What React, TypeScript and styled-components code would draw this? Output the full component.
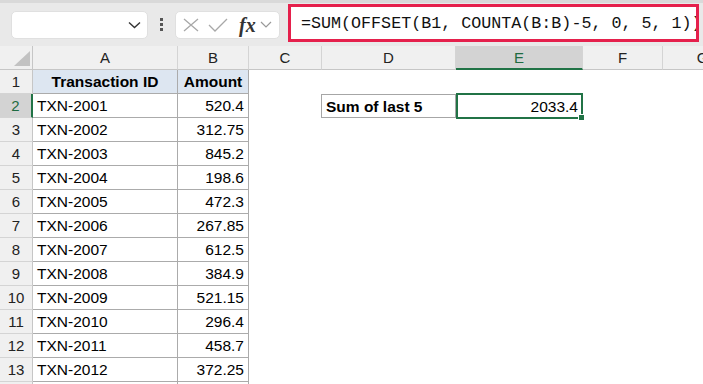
import { Fragment } from 'react';
import styled, { createGlobalStyle } from 'styled-components';

const GlobalStyle = createGlobalStyle`
  html, body {
    margin: 0;
    padding: 0;
    background: #ffffff;
    overflow: hidden;
  }
  body {
    font-family: "Liberation Sans", Arial, sans-serif;
  }
`;

const Page = styled.div`
  width: 703px;
  height: 384px;
  overflow: hidden;
  background: #ffffff;
`;

const FormulaBar = styled.div`
  height: 46px;
  box-sizing: border-box;
  border-top: 3px solid #d9d9d9;
  background: #e9e9e9;
  display: flex;
  align-items: center;
  padding: 0 4px 0 11px;
`;

const NameBox = styled.div`
  width: 137px;
  height: 28px;
  box-sizing: border-box;
  background: #ffffff;
  border-radius: 5px;
  border: 1px solid #e0e0e0;
  display: flex;
  align-items: center;
  justify-content: flex-end;
  padding-right: 6px;
`;

const Dots = styled.div`
  width: 27px;
  display: flex;
  flex-direction: column;
  align-items: center;
  gap: 2px;
  span {
    width: 3px;
    height: 3px;
    background: #555;
    display: block;
  }
`;

const FxBox = styled.div`
  width: 105px;
  height: 28px;
  box-sizing: border-box;
  background: #ffffff;
  border-radius: 5px;
  border: 1px solid #e0e0e0;
  display: flex;
  align-items: center;
  padding-left: 7px;
  gap: 9px;
`;

const Fx = styled.span`
  font-family: "Liberation Serif", "Times New Roman", serif;
  font-style: italic;
  font-weight: bold;
  font-size: 20px;
  color: #333;
  margin-left: 2px;
  margin-right: -5px;
  line-height: 1;
`;

const FormulaInput = styled.div`
  flex: 1;
  margin-left: 8px;
  height: 38px;
  margin-top: -3px;
  box-sizing: border-box;
  border: 3px solid #e5204c;
  background: #ffffff;
  font-family: "Liberation Mono", "DejaVu Sans Mono", monospace;
  font-size: 16.7px;
  color: #111;
  white-space: nowrap;
  overflow: hidden;
  display: flex;
  align-items: center;
  padding-left: 10px;
`;

const Grid = styled.div`
  display: grid;
  grid-template-columns: 33px 145px 71px 73px 134px 127px 80px 80px;
  grid-auto-rows: 24px;
  font-size: 15.5px;
`;

const ColHead = styled.div<{ $sel?: boolean }>`
  box-sizing: border-box;
  background: ${p => (p.$sel ? '#d3d3d3' : '#f0f0f0')};
  color: ${p => (p.$sel ? '#1e6b41' : '#222')};
  border-right: 1px solid #d4d4d4;
  border-bottom: ${p => (p.$sel ? '2px solid #217346' : '1px solid #c6c6c6')};
  display: flex;
  align-items: center;
  justify-content: center;
  font-size: 15px;
`;

const Corner = styled.div`
  box-sizing: border-box;
  background: #f0f0f0;
  border-right: 1px solid #c6c6c6;
  border-bottom: 1px solid #c6c6c6;
  display: flex;
  align-items: flex-end;
  justify-content: flex-end;
  padding: 0 2px 3px 0;
`;

const RowHead = styled.div<{ $sel?: boolean }>`
  box-sizing: border-box;
  background: ${p => (p.$sel ? '#d3d3d3' : '#f0f0f0')};
  color: ${p => (p.$sel ? '#1e6b41' : '#222')};
  border-right: ${p => (p.$sel ? '2px solid #217346' : '1px solid #c6c6c6')};
  border-bottom: 1px solid #d4d4d4;
  display: flex;
  align-items: center;
  justify-content: center;
  font-size: 15px;
`;

const Cell = styled.div<{ $head?: boolean; $num?: boolean }>`
  box-sizing: border-box;
  background: ${p => (p.$head ? '#dde6f1' : '#ffffff')};
  border-right: 1px solid #ababab;
  border-bottom: 1px solid #ababab;
  display: flex;
  align-items: center;
  justify-content: ${p => (p.$head ? 'center' : p.$num ? 'flex-end' : 'flex-start')};
  padding: 1px 4px 0;
  font-weight: ${p => (p.$head ? 'bold' : 'normal')};
  color: #000;
  white-space: nowrap;
`;

const Empty = styled.div`
  background: #ffffff;
`;

const LabelCell = styled.div`
  box-sizing: border-box;
  border: 1px solid #a6a6a6;
  margin-left: -1px;
  display: flex;
  align-items: center;
  padding: 1px 4px 0;
  font-weight: bold;
  color: #000;
`;

const ActiveCell = styled.div`
  position: relative;
  box-sizing: border-box;
  border: 2px solid #217346;
  margin: -1px 0 -1px 0;
  display: flex;
  align-items: center;
  justify-content: flex-end;
  padding: 1px 3px 0;
  color: #000;
`;

const FillHandle = styled.span`
  position: absolute;
  right: -4px;
  bottom: -4px;
  width: 5px;
  height: 5px;
  background: #217346;
  border: 1px solid #fff;
`;

const amounts = ['520.4', '312.75', '845.2', '198.6', '472.3', '267.85', '612.5', '384.9', '521.15', '296.4', '458.7', '372.25'];
const cols = ['A', 'B', 'C', 'D', 'E', 'F', 'G'];

export default function App() {
  return (
    <Page>
      <GlobalStyle />
      <FormulaBar>
        <NameBox>
          <svg width="13" height="8" viewBox="0 0 13 8">
            <path d="M1 1.5 L6.5 6.5 L12 1.5" fill="none" stroke="#333" strokeWidth="1.4" />
          </svg>
        </NameBox>
        <Dots>
          <span />
          <span />
          <span />
        </Dots>
        <FxBox>
          <svg width="16" height="14" viewBox="0 0 16 14">
            <path d="M1 1 L15 13 M15 1 L1 13" stroke="#a8a8a8" strokeWidth="1.3" fill="none" />
          </svg>
          <svg width="20" height="14" viewBox="0 0 20 14">
            <path d="M1 7 L7 13 L19 1" stroke="#a8a8a8" strokeWidth="1.3" fill="none" />
          </svg>
          <Fx>fx</Fx>
          <svg width="12" height="7" viewBox="0 0 12 7">
            <path d="M1 1 L6 6 L11 1" fill="none" stroke="#999" strokeWidth="1.2" />
          </svg>
        </FxBox>
        <FormulaInput>=SUM(OFFSET(B1, COUNTA(B:B)-5, 0, 5, 1))</FormulaInput>
      </FormulaBar>
      <Grid>
        <Corner>
          <svg width="16" height="15" viewBox="0 0 16 15">
            <path d="M16 0 L16 15 L0 15 Z" fill="#c2c2c2" />
          </svg>
        </Corner>
        {cols.map(c => (
          <ColHead key={c} $sel={c === 'E'}>{c}</ColHead>
        ))}

        <RowHead>1</RowHead>
        <Cell $head>Transaction ID</Cell>
        <Cell $head>Amount</Cell>
        <Empty />
        <Empty />
        <Empty />
        <Empty />
        <Empty />

        {amounts.map((a, i) => {
          const row = i + 2;
          return (
            <Fragment key={row}>
              <RowHead $sel={row === 2}>{row}</RowHead>
              <Cell>TXN-{2001 + i}</Cell>
              <Cell $num>{a}</Cell>
              <Empty />
              {row === 2 ? (
                <>
                  <LabelCell>Sum of last 5</LabelCell>
                  <ActiveCell>
                    2033.4
                    <FillHandle />
                  </ActiveCell>
                </>
              ) : (
                <>
                  <Empty />
                  <Empty />
                </>
              )}
              <Empty />
              <Empty />
            </Fragment>
          );
        })}
        <RowHead />
        <Cell />
        <Cell />
      </Grid>
    </Page>
  );
}
